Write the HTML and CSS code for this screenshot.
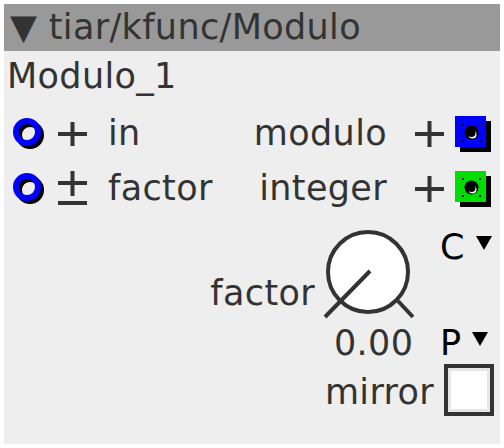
FILE: index.html
```html
<!DOCTYPE html>
<html lang="en">
<head>
  <meta charset="UTF-8" />
  <title>tiar/kfunc/Modulo</title>
  <link rel="stylesheet" href="styles.css">
</head>
<body>
  <div class="object">
    <div class="title">▼ tiar/kfunc/Modulo</div>
    <div class="instance">Modulo_1</div>

    <div class="ports">
      <div class="port-row">
        <div class="inlet">
          <svg class="jack" width="34" height="36" viewBox="0 0 34 36">
            <circle cx="17" cy="19" r="11" fill="none" stroke="#000" stroke-width="6"/>
            <circle cx="14" cy="16" r="11" fill="none" stroke="#00f" stroke-width="6"/>
          </svg>
          <svg class="type" width="30" height="36" viewBox="0 0 30 36">
            <path d="M0 18H29M14.5 6V30" stroke="#333" stroke-width="4"/>
          </svg>
          <span class="port-name">in</span>
        </div>
        <div class="outlet">
          <span class="port-name">modulo</span>
          <svg class="type" width="30" height="36" viewBox="0 0 30 36">
            <path d="M0 18H29M14.5 5V31" stroke="#333" stroke-width="4"/>
          </svg>
          <svg class="jack" width="36" height="36" viewBox="0 0 36 36">
            <rect x="5" y="5" width="31" height="31" fill="#000"/>
            <rect x="0" y="0" width="31" height="31" fill="#00f"/>
            <rect x="7" y="7" width="2" height="2" fill="#000"/>
            <rect x="24" y="7" width="2" height="2" fill="#000"/>
            <rect x="7" y="24" width="2" height="2" fill="#000"/>
            <rect x="24" y="24" width="2" height="2" fill="#000"/>
            <circle cx="16.5" cy="16.5" r="7" fill="#000"/>
            <circle cx="17.5" cy="18.5" r="4" fill="#fff"/>
            <circle cx="16.5" cy="17" r="4" fill="#000"/>
          </svg>
        </div>
      </div>
      <div class="port-row">
        <div class="inlet">
          <svg class="jack" width="34" height="36" viewBox="0 0 34 36">
            <circle cx="17" cy="19" r="11" fill="none" stroke="#000" stroke-width="6"/>
            <circle cx="14" cy="16" r="11" fill="none" stroke="#00f" stroke-width="6"/>
          </svg>
          <svg class="type" width="30" height="40" viewBox="0 0 30 40">
            <path d="M0 14H29M14.5 2V27M0 34H29" stroke="#333" stroke-width="4"/>
          </svg>
          <span class="port-name">factor</span>
        </div>
        <div class="outlet">
          <span class="port-name">integer</span>
          <svg class="type" width="30" height="36" viewBox="0 0 30 36">
            <path d="M0 18H29M14.5 5V31" stroke="#333" stroke-width="4"/>
          </svg>
          <svg class="jack" width="36" height="36" viewBox="0 0 36 36">
            <rect x="5" y="5" width="31" height="31" fill="#000"/>
            <rect x="0" y="0" width="31" height="31" fill="#00dd00"/>
            <rect x="7" y="7" width="2" height="2" fill="#000"/>
            <rect x="24" y="7" width="2" height="2" fill="#000"/>
            <rect x="7" y="24" width="2" height="2" fill="#000"/>
            <rect x="24" y="24" width="2" height="2" fill="#000"/>
            <circle cx="16.5" cy="16.5" r="7" fill="#000"/>
            <circle cx="17.5" cy="18.5" r="4" fill="#fff"/>
            <circle cx="16.5" cy="17" r="4" fill="#000"/>
          </svg>
        </div>
      </div>
    </div>

    <div class="params">
      <span class="param-label knob-label">factor</span>
      <svg class="knob" width="92" height="92" viewBox="0 0 92 92">
        <circle cx="46" cy="44" r="40" fill="#fff" stroke="#333" stroke-width="4"/>
        <path d="M48 43L3 89M76 73L91 89" stroke="#333" stroke-width="4"/>
      </svg>
      <div class="preset preset-top">
        <span>C</span>
        <svg width="16" height="14" viewBox="0 0 16 14"><polygon points="0,0 16,0 8,14" fill="#000"/></svg>
      </div>
      <span class="knob-value">0.00</span>
      <div class="preset preset-bottom">
        <span>P</span>
        <svg width="16" height="14" viewBox="0 0 16 14"><polygon points="0,0 16,0 8,14" fill="#000"/></svg>
      </div>
      <span class="param-label mirror-label">mirror</span>
      <div class="checkbox"></div>
    </div>
  </div>
</body>
</html>
```

FILE: styles.css
```css
body {
  margin: 0;
  background: #fff;
  font-family: "DejaVu Sans", sans-serif;
  font-size: 35px;
  letter-spacing: 0.35px;
  color: #333;
}
svg {
  display: block;
  flex-shrink: 0;
}
.object {
  margin: 4px;
  width: 496px;
  height: 440px;
  background: #eee;
}
.title {
  height: 47px;
  line-height: 47px;
  background: #999;
  padding-left: 6px;
  white-space: nowrap;
}
.instance {
  height: 50px;
  line-height: 50px;
  padding-left: 3px;
}
.ports {
  padding-top: 5px;
}
.port-row {
  height: 55px;
  line-height: 55px;
  display: flex;
  justify-content: space-between;
  align-items: center;
}
.inlet, .outlet {
  display: flex;
  align-items: center;
}
.inlet {
  padding-left: 9px;
}
.inlet .type {
  margin-left: 11px;
  margin-right: 20px;
}
.outlet {
  padding-right: 9px;
}
.outlet .type {
  margin-left: 28px;
  margin-right: 10px;
}
.port-name {
  white-space: nowrap;
}

.params {
  display: grid;
  grid-template-columns: auto 118px 54px;
  grid-template-rows: 92px 43px 55px;
  justify-content: end;
  padding-top: 12px;
  padding-right: 6px;
}
.param-label {
  line-height: 40px;
  justify-self: end;
}
.knob-label {
  grid-column: 1;
  grid-row: 1;
  align-self: end;
  margin-bottom: 7px;
  padding-right: 7px;
}
.knob {
  grid-column: 2;
  grid-row: 1;
}
.preset {
  display: flex;
  align-items: flex-start;
  gap: 11px;
  color: #000;
  grid-column: 3;
}
.preset-top {
  grid-row: 1;
  line-height: 38px;
}
.preset-top svg {
  margin-top: 8px;
}
.preset-bottom {
  grid-row: 2;
  line-height: 40px;
  padding-top: 3px;
}
.preset-bottom svg {
  margin-top: 9px;
}
.knob-value {
  grid-column: 2;
  grid-row: 2;
  line-height: 40px;
  padding-top: 3px;
  padding-left: 12px;
}
.mirror-label {
  grid-column: 1 / 3;
  grid-row: 3;
  align-self: start;
  margin-top: 9px;
  padding-right: 6px;
}
.checkbox {
  grid-column: 3;
  grid-row: 3;
  justify-self: end;
  margin-top: 1px;
  width: 42px;
  height: 44px;
  background: #fff;
  border: 4px solid #333;
  box-shadow: inset 0 0 0 3px #e6e6e6;
}
```
